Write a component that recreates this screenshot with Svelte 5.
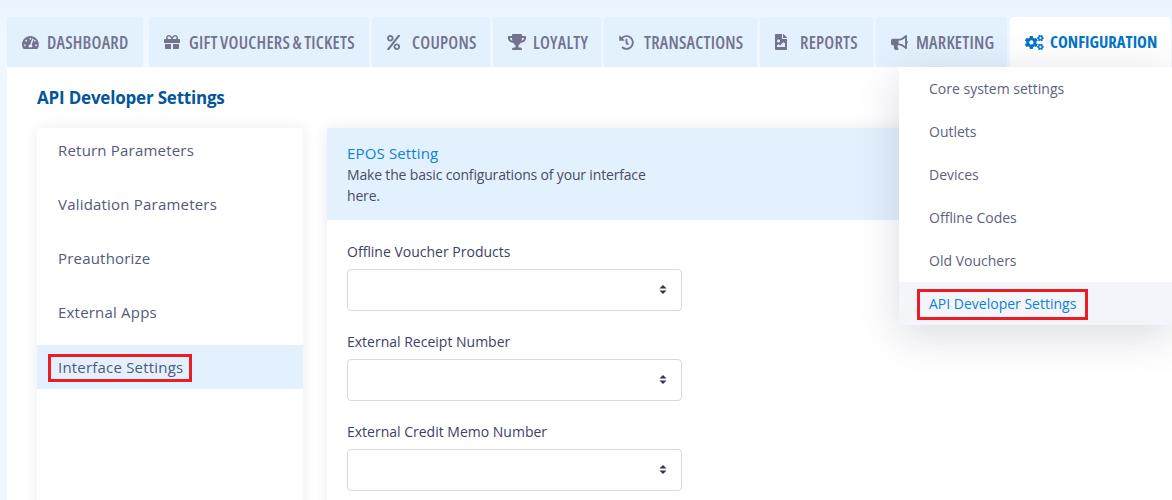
<script>
    const tabs = [
        { label: 'DASHBOARD', icon: 'dash', w: 136, h: 15 },
        { label: 'GIFT VOUCHERS & TICKETS', icon: 'gift', w: 220, h: 16 },
        { label: 'COUPONS', icon: 'percent', w: 118, h: 15 },
        { label: 'LOYALTY', icon: 'trophy', w: 108, h: 16 },
        { label: 'TRANSACTIONS', icon: 'history', w: 153, h: 15 },
        { label: 'REPORTS', icon: 'file', w: 113, h: 16 },
        { label: 'MARKETING', icon: 'bullhorn', w: 131, h: 15 },
        { label: 'CONFIGURATION', icon: 'cogs', w: 161, h: 15, active: true }
    ]
    const paths = {
        dash: ['0 0 576 512', 'M288 32C128.94 32 0 160.94 0 320c0 52.8 14.25 102.26 39.06 144.8 5.61 9.62 16.3 15.2 27.44 15.2h443c11.14 0 21.83-5.58 27.44-15.2C561.75 422.26 576 372.8 576 320c0-159.06-128.94-288-288-288zm0 64c14.71 0 26.58 10.13 30.32 23.65-1.11 2.26-2.64 4.23-3.45 6.67l-9.22 27.67c-5.13 3.49-10.97 6.01-17.64 6.01-17.67 0-32-14.33-32-32S270.33 96 288 96zM96 384c-17.67 0-32-14.33-32-32s14.33-32 32-32 32 14.33 32 32-14.33 32-32 32zm48-160c-17.67 0-32-14.33-32-32s14.33-32 32-32 32 14.33 32 32-14.33 32-32 32zm246.77-72.41l-61.33 184C343.13 347.33 352 364.54 352 384c0 11.72-3.38 22.55-8.88 32H232.88c-5.5-9.45-8.88-20.28-8.88-32 0-33.94 26.5-61.43 59.9-63.59l61.34-184.01c4.17-12.56 17.73-19.45 30.36-15.17 12.57 4.19 19.35 17.79 15.17 30.36zm14.66 57.2l15.52-46.55c3.47-1.29 7.13-2.23 11.05-2.23 17.67 0 32 14.33 32 32s-14.33 32-32 32c-11.38-.01-20.89-6.28-26.57-15.22zM480 384c-17.67 0-32-14.33-32-32s14.33-32 32-32 32 14.33 32 32-14.33 32-32 32z'],
        gift: ['0 0 512 512', 'M32 448c0 17.7 14.3 32 32 32h160V320H32v128zm256 32h160c17.7 0 32-14.3 32-32V320H288v160zm192-320h-42.1c6.2-12.1 10.1-25.5 10.1-40 0-48.5-39.5-88-88-88-41.6 0-68.5 21.3-103 68.3-34.5-47-61.4-68.3-103-68.3-48.5 0-88 39.5-88 88 0 14.5 3.8 27.9 10.1 40H32c-17.7 0-32 14.3-32 32v80c0 8.8 7.2 16 16 16h480c8.8 0 16-7.2 16-16v-80c0-17.7-14.3-32-32-32zm-326.1 0c-22.1 0-40-17.9-40-40s17.9-40 40-40c19.9 0 34.6 3.3 86.1 80h-86.1zm206.1 0h-86.1c51.4-76.5 65.7-80 86.1-80 22.1 0 40 17.9 40 40s-17.9 40-40 40z'],
        percent: ['0 0 448 512', 'M112 224c61.9 0 112-50.1 112-112S173.9 0 112 0 0 50.1 0 112s50.1 112 112 112zm0-160c26.5 0 48 21.5 48 48s-21.5 48-48 48-48-21.5-48-48 21.5-48 48-48zm224 224c-61.9 0-112 50.1-112 112s50.1 112 112 112 112-50.1 112-112-50.1-112-112-112zm0 160c-26.5 0-48-21.5-48-48s21.5-48 48-48 48 21.5 48 48-21.5 48-48 48zM392.3.2l31.6-.1c19.4-.1 30.9 21.8 19.7 37.8L77.4 501.6a23.95 23.95 0 0 1-19.6 10.2l-33.4.1c-19.5 0-30.9-21.9-19.7-37.8l368-463.7C377.2 4 384.5.2 392.3.2z'],
        trophy: ['0 0 576 512', 'M552 64H448V24c0-13.3-10.7-24-24-24H152c-13.3 0-24 10.7-24 24v40H24C10.7 64 0 74.7 0 88v56c0 35.7 22.5 72.4 61.9 100.7 31.5 22.7 69.8 37.1 110 41.7C203.3 338.5 240 360 240 360v72h-48c-35.3 0-64 20.7-64 56v12c0 6.6 5.4 12 12 12h296c6.6 0 12-5.4 12-12v-12c0-35.3-28.7-56-64-56h-48v-72s36.7-21.5 68.1-73.6c40.3-4.6 78.6-19 110-41.7 39.3-28.3 61.9-65 61.9-100.7V88c0-13.3-10.7-24-24-24zM99.3 192.8C74.9 175.2 64 155.6 64 144v-16h64.2c1 32.6 5.8 61.2 12.8 86.2-15.1-5.2-29.2-12.4-41.7-21.4zM512 144c0 16.1-17.7 36.1-35.3 48.8-12.5 9-26.7 16.2-41.8 21.4 7-25 11.8-53.6 12.8-86.2H512v16z'],
        history: ['0 0 512 512', 'M504 255.531c.253 136.64-111.18 248.372-247.82 248.468-59.015.042-113.223-20.53-155.822-54.911-11.077-8.94-11.905-25.541-1.839-35.607l11.267-11.267c8.609-8.609 22.353-9.551 31.891-1.984C173.062 425.135 212.781 440 256 440c101.705 0 184-82.311 184-184 0-101.705-82.311-184-184-184-48.814 0-93.149 18.969-126.068 49.932l50.754 50.754c10.08 10.08 2.941 27.314-11.313 27.314H24c-8.837 0-16-7.163-16-16V38.627c0-14.254 17.234-21.393 27.314-11.314l49.372 49.372C129.209 34.136 189.552 8 256 8c136.81 0 247.747 110.78 248 247.531zm-180.912 78.784l9.823-12.63c8.138-10.463 6.253-25.542-4.21-33.679L288 256.349V152c0-13.255-10.745-24-24-24h-16c-13.255 0-24 10.745-24 24v135.651l65.409 50.874c10.463 8.137 25.541 6.253 33.679-4.21z'],
        file: ['0 0 384 512', 'M384 121.941V128H256V0h6.059a24 24 0 0 1 16.97 7.029l97.941 97.941a24.002 24.002 0 0 1 7.03 16.971zM248 160c-13.2 0-24-10.8-24-24V0H24C10.745 0 0 10.745 0 24v464c0 13.255 10.745 24 24 24h336c13.255 0 24-10.745 24-24V160H248zm-135.455 16c26.51 0 48 21.49 48 48s-21.49 48-48 48-48-21.49-48-48 21.491-48 48-48zm208 240h-256l.485-48.485L104.545 328c4.686-4.686 11.799-4.201 16.485.485L160.545 368 264.06 264.485c4.686-4.686 12.284-4.686 16.971 0L320.545 304v112z'],
        bullhorn: ['0 0 576 512', 'M576 240c0-23.63-12.95-44.04-32-55.12V32.01C544 23.26 537.02 0 512 0c-7.12 0-14.19 2.38-19.98 7.02l-85.03 68.03C364.28 109.19 310.66 128 256 128H64c-35.35 0-64 28.65-64 64v96c0 35.35 28.65 64 64 64h33.7c-1.39 10.48-2.18 21.14-2.18 32 0 39.77 9.26 77.35 25.56 110.94 5.19 10.69 16.52 17.06 28.4 17.06h74.28c26.05 0 41.69-29.84 25.9-50.56-16.4-21.52-26.15-48.36-26.15-77.44 0-11.11 1.62-21.79 4.41-32H256c54.66 0 108.28 18.81 150.98 52.95l85.03 68.03a32.023 32.023 0 0 0 19.98 7.02c24.92 0 32-22.78 32-32V295.13C563.05 284.04 576 263.63 576 240zm-96 141.42l-33.05-26.44C392.95 311.78 325.12 288 256 288v-96c69.12 0 136.95-23.78 190.95-66.98L480 98.58v282.84z'],
        cogs: ['0 0 640 512', 'M512.1 191l-8.2 14.3c-3 5.3-9.4 7.5-15.1 5.4-11.8-4.4-22.6-10.7-32.1-18.6-4.6-3.8-5.8-10.5-2.8-15.7l8.2-14.3c-6.9-8-12.3-17.3-15.9-27.4h-16.5c-6 0-11.2-4.3-12.2-10.3-2-12-2.1-24.6 0-37.1 1-6 6.2-10.4 12.2-10.4h16.5c3.6-10.1 9-19.4 15.9-27.4l-8.2-14.3c-3-5.2-1.9-11.9 2.8-15.7 9.5-7.9 20.4-14.2 32.1-18.6 5.7-2.1 12.1.1 15.1 5.4l8.2 14.3c10.5-1.9 21.2-1.9 31.7 0L552 6.3c3-5.3 9.4-7.5 15.1-5.4 11.8 4.4 22.6 10.7 32.1 18.6 4.6 3.8 5.8 10.5 2.8 15.7l-8.2 14.3c6.9 8 12.3 17.3 15.9 27.4h16.5c6 0 11.2 4.3 12.2 10.3 2 12 2.1 24.6 0 37.1-1 6-6.2 10.4-12.2 10.4h-16.5c-3.6 10.1-9 19.4-15.9 27.4l8.2 14.3c3 5.2 1.9 11.9-2.8 15.7-9.5 7.9-20.4 14.2-32.1 18.6-5.7 2.1-12.1-.1-15.1-5.4l-8.2-14.3c-10.4 1.9-21.2 1.9-31.7 0zm-10.5-58.8c38.5 29.6 82.4-14.3 52.8-52.8-38.5-29.7-82.4 14.3-52.8 52.8zM386.3 286.1l33.7 16.8c10.1 5.8 14.5 18.1 10.5 29.1-8.9 24.2-26.4 46.4-42.6 65.8-7.4 8.9-20.2 11.1-30.3 5.3l-29.1-16.8c-16 13.7-34.6 24.6-54.9 31.7v33.6c0 11.6-8.3 21.6-19.7 23.6-24.6 4.2-50.4 4.4-75.9 0-11.5-2-20-11.9-20-23.6V418c-20.3-7.2-38.9-18-54.9-31.7L74 403c-10 5.8-22.9 3.6-30.3-5.3-16.2-19.4-33.3-41.6-42.2-65.7-4-10.9.4-23.2 10.5-29.1l33.3-16.8c-3.9-20.9-3.9-42.4 0-63.4L12 205.8c-10.1-5.8-14.6-18.1-10.5-29 8.9-24.2 26-46.4 42.2-65.8 7.4-8.9 20.2-11.1 30.3-5.3l29.1 16.8c16-13.7 34.6-24.6 54.9-31.7V57.1c0-11.5 8.2-21.5 19.6-23.5 24.6-4.2 50.5-4.4 76-.1 11.5 2 20 11.9 20 23.6v33.6c20.3 7.2 38.9 18 54.9 31.7l29.1-16.8c10-5.8 22.9-3.6 30.3 5.3 16.2 19.4 33.2 41.6 42.1 65.8 4 10.9.1 23.2-10 29.1l-33.7 16.8c3.9 21 3.9 42.5 0 63.5zm-117.6 21.1c59.2-77-28.7-164.9-105.7-105.7-59.2 77 28.7 164.9 105.7 105.7zm243.4 182.7l-8.2 14.3c-3 5.3-9.4 7.5-15.1 5.4-11.8-4.4-22.6-10.7-32.1-18.6-4.6-3.8-5.8-10.5-2.8-15.7l8.2-14.3c-6.9-8-12.3-17.3-15.9-27.4h-16.5c-6 0-11.2-4.3-12.2-10.3-2-12-2.1-24.6 0-37.1 1-6 6.2-10.4 12.2-10.4h16.5c3.6-10.1 9-19.4 15.9-27.4l-8.2-14.3c-3-5.2-1.9-11.9 2.8-15.7 9.5-7.9 20.4-14.2 32.1-18.6 5.7-2.1 12.1.1 15.1 5.4l8.2 14.3c10.5-1.9 21.2-1.9 31.7 0l8.2-14.3c3-5.3 9.4-7.5 15.1-5.4 11.8 4.4 22.6 10.7 32.1 18.6 4.6 3.8 5.8 10.5 2.8 15.7l-8.2 14.3c6.9 8 12.3 17.3 15.9 27.4h16.5c6 0 11.2 4.3 12.2 10.3 2 12 2.1 24.6 0 37.1-1 6-6.2 10.4-12.2 10.4h-16.5c-3.6 10.1-9 19.4-15.9 27.4l8.2 14.3c3 5.2 1.9 11.9-2.8 15.7-9.5 7.9-20.4 14.2-32.1 18.6-5.7 2.1-12.1-.1-15.1-5.4l-8.2-14.3c-10.4 1.9-21.2 1.9-31.7 0zM501.6 431c38.5 29.6 82.4-14.3 52.8-52.8-38.5-29.6-82.4 14.3-52.8 52.8z']
    }
    const sideItems = ['Return Parameters', 'Validation Parameters', 'Preauthorize', 'External Apps']
    const menuItems = ['Core system settings', 'Outlets', 'Devices', 'Offline Codes', 'Old Vouchers']
    const fields = ['Offline Voucher Products', 'External Receipt Number', 'External Credit Memo Number']
</script>

<div class="page">
    <nav class="tabs">
        {#each tabs as tab}
            <div class="tab" class:active={tab.active} style="width: {tab.w}px">
                <span class="icon-box">
                    <svg class="icon" viewBox={paths[tab.icon][0]} height={tab.h}><path d={paths[tab.icon][1]} /></svg>
                </span>
                <span class="tab-label">{tab.label}</span>
            </div>
        {/each}
    </nav>

    <main class="content">
        <h1>API Developer Settings</h1>
        <div class="columns">
            <aside class="side">
                {#each sideItems as item}
                    <div class="side-item">{item}</div>
                {/each}
                <div class="side-item current"><span class="marked">Interface Settings</span></div>
            </aside>
            <section class="panel">
                <header class="panel-head">
                    <h2>EPOS Setting</h2>
                    <p>Make the basic configurations of your interface here.</p>
                </header>
                <div class="form">
                    {#each fields as field}
                        <div class="field">
                            <label for={field}>{field}</label>
                            <div class="select-wrap">
                                <select id={field}></select>
                                <svg class="arrows" viewBox="0 0 9 12" width="8" height="11"><path d="M4.5 1 8.5 5H.5zM4.5 11 .5 7h8z" /></svg>
                            </div>
                        </div>
                    {/each}
                </div>
            </section>
        </div>
    </main>

    <div class="menu">
        {#each menuItems as item}
            <div class="menu-item">{item}</div>
        {/each}
        <div class="menu-item current"><span class="marked">API Developer Settings</span></div>
    </div>
</div>

<style>
    :global(body) {
        background: #f0f7ff;
    }
    .page {
        position: relative;
        height: 500px;
        overflow: hidden;
        padding: 17px 0 0 7px;
        box-sizing: border-box;
        font-family: "Open Sans", sans-serif;
        background: linear-gradient(#eaf4fe, #f0f7ff 40px);
    }
    .tabs {
        display: flex;
        gap: 3px;
        height: 50px;
    }
    .tab {
        flex: none;
        box-sizing: border-box;
        height: 50px;
        padding-left: 15px;
        display: flex;
        align-items: center;
        background: #e3f1fe;
        border-radius: 4px 4px 0 0;
        color: #73738f;
    }
    .tab:first-child {
        margin-right: 3px;
    }
    .tab.active {
        background: #fff;
        color: #0275c9;
    }
    .icon-box {
        flex: none;
        width: 25px;
        display: flex;
        align-items: center;
    }
    .icon {
        display: block;
        fill: currentColor;
    }
    .tab-label {
        font-size: 17.4px;
        line-height: 24px;
        font-weight: 540;
        font-stretch: 75%;
        letter-spacing: 0.22px;
        word-spacing: -1px;
        white-space: nowrap;
    }
    .active .tab-label {
        font-size: 16.6px;
        font-weight: 700;
        letter-spacing: 0;
        word-spacing: 0;
    }
    .content {
        background: #fff;
        padding: 0 0 0 30px;
        height: 433px;
    }
    h1 {
        margin: 0;
        padding-top: 19px;
        height: 42px;
        font-size: 17px;
        line-height: 23px;
        letter-spacing: -0.2px;
        font-weight: 700;
        color: #02569b;
    }
    .columns {
        display: flex;
        gap: 24px;
    }
    .side {
        flex: none;
        width: 266px;
        height: 400px;
        padding-top: 1px;
        box-sizing: border-box;
        background: #fff;
        border-radius: 4px 4px 0 0;
        box-shadow: 0 0 14px rgba(60, 70, 110, 0.1);
    }
    .side-item {
        box-sizing: border-box;
        height: 54px;
        padding: 10px 21px 0;
        font-size: 15px;
        line-height: 22px;
        letter-spacing: 0.2px;
        color: #53597c;
    }
    .side-item.current {
        height: 44px;
        padding: 9px 0 0 11px;
        background: #e3f1fe;
    }
    .marked {
        display: inline-block;
        border: 3px solid #ec1c24;
        padding: 0 6px 1px 7px;
        line-height: 21px;
    }
    .panel {
        flex: 1;
        background: #fff;
        box-shadow: 0 0 14px rgba(60, 70, 110, 0.1);
    }
    .panel-head {
        box-sizing: border-box;
        height: 92px;
        padding: 14px 20px 0;
        background: #e3f1fe;
    }
    h2 {
        margin: 0;
        font-size: 15px;
        line-height: 22px;
        letter-spacing: 0.15px;
        font-weight: 400;
        color: #0a82d8;
    }
    .panel-head p {
        margin: 0;
        width: 320px;
        font-size: 14px;
        line-height: 21px;
        letter-spacing: -0.17px;
        color: #4a4a68;
    }
    .form {
        padding: 21px 20px 0;
    }
    .field {
        height: 90px;
    }
    label {
        display: block;
        font-size: 14px;
        line-height: 21px;
        color: #3d4166;
        margin-bottom: 7px;
    }
    .select-wrap {
        position: relative;
        width: 335px;
    }
    select {
        display: block;
        appearance: none;
        box-sizing: border-box;
        width: 100%;
        height: 42px;
        background: #fff;
        border: 1px solid #d9d9de;
        border-radius: 4px;
    }
    .arrows {
        position: absolute;
        top: 15px;
        right: 15px;
        fill: #34344a;
    }
    .menu {
        position: absolute;
        top: 67px;
        left: 899px;
        width: 273px;
        background: #fff;
        box-shadow: 0 10px 40px rgba(70, 75, 110, 0.2);
    }
    .menu-item {
        box-sizing: border-box;
        height: 43px;
        padding: 11px 0 0 30px;
        font-size: 14px;
        line-height: 21px;
        color: #5d6280;
    }
    .menu-item.current {
        padding: 7px 0 0 18px;
        background: #f3f5fb;
        color: #0a82d8;
    }
    .menu-item .marked {
        padding: 0 9px 1px 9px;
        line-height: 24px;
    }
</style>
